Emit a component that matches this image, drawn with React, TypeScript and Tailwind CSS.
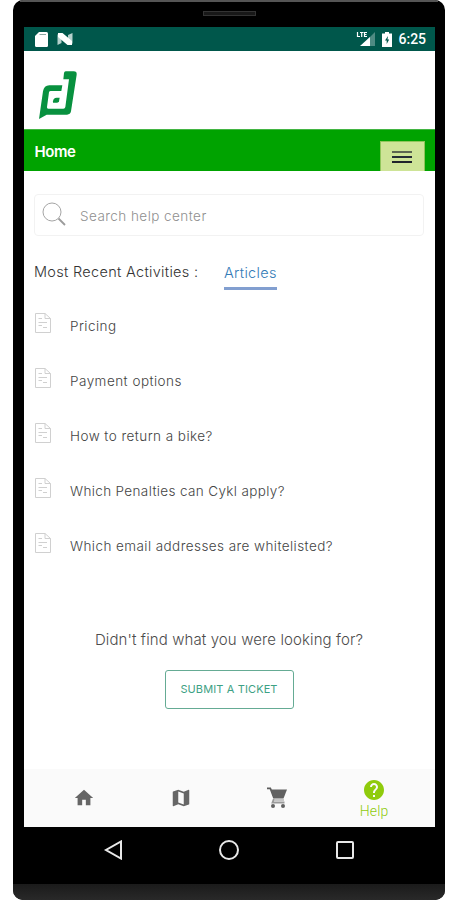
import React from 'react'
import { MdHome, MdMap, MdHelp } from 'react-icons/md'

const articles = [
  { title: 'Pricing', spacing: 'tracking-[0.45px]' },
  { title: 'Payment options', spacing: 'tracking-[0.48px]' },
  { title: 'How to return a bike?', spacing: 'tracking-[0.45px]' },
  { title: 'Which Penalties can Cykl apply?', spacing: 'tracking-[0.36px]' },
  { title: 'Which email addresses are whitelisted?', spacing: 'tracking-[0.43px]' },
]

function StatusBar() {
  return (
    <div className="h-6 bg-[#00574b] flex items-center pl-[11px] pr-2 text-white">
      <svg className="w-[13px] h-[15px]" viewBox="0 0 13 15">
        <path d="M4 0H11.5Q13 0 13 1.5V13.500Q13 15 11.500 15H1.500Q0 15 0 13.500V4Z" fill="#fff" />
        <path d="M4.500 2.500H11" stroke="#8aa7a2" strokeWidth="1.200" />
      </svg>
      <svg className="w-[16px] h-[14px] ml-[9px]" viewBox="0 0 16 14">
        <path d="M0.500 2.500 4.500 1V11L0.500 13ZM11 3 15.500 1V11.500L11 13Z" fill="#b5d0cc" />
        <path d="M1 1H5.500L15 9V13H10.500L1 5Z" fill="#fff" />
      </svg>
      <div className="flex-1" />
      <svg className="w-[20px] h-[16px]" viewBox="0 0 20 16">
        <path d="M19 1V15H5Z" fill="#4f8b83" />
        <path d="M14 6V15H4Z" fill="#fff" />
        <path d="M1.500 1V5.500H4M4 1.500H7.500M5.700 1.500V6M11 1.500H8.500V5.500H11M8.500 3.500H10.500" stroke="#fff" strokeWidth="1.200" fill="none" />
      </svg>
      <svg className="w-[10px] h-[15px] ml-[6px]" viewBox="0 0 10 15">
        <path d="M3 0H7V1.500H10V15H0V1.500H3Z" fill="#fff" />
        <path d="M6 4 3 8.500H4.700V12L7.200 7.500H5.500Z" fill="#00574b" />
      </svg>
      <span className="ml-[7px] w-[28px] font-[Roboto] font-medium text-[14px] leading-[25px] whitespace-nowrap">6:25</span>
    </div>
  )
}

function Logo() {
  return (
    <svg className="w-[38px] h-[48px]" viewBox="0 0 114 144">
      <path
        d="M80 1H104Q114 1 113 11L96 121Q94 131 84 131H23L0 144L12 61Q15 43 31 43H70L67 60H35Q31 60 30 64L24 108Q23 113 28 113H73Q78 113 79 108L90 25H73L75 6Q76 1 80 1Z"
        fill="#08913f"
      />
      <path d="M42 91Q43 80 53 80H62L60 91Q59 95 54 95H42Z" fill="#08913f" />
    </svg>
  )
}

function ArticleIcon() {
  return (
    <svg className="w-[17px] h-5" viewBox="0 0 17 20" fill="none" stroke="#d0d0d0" strokeWidth="1">
      <path d="M1.500 0.500H11L16.500 5.500V19.500H1.500Z" />
      <path d="M11 0.500V5.500H16.500M4.500 5.500H8M4.500 9.500H13M4.500 12.500H8M9 14.500H13" />
    </svg>
  )
}

function CartIcon() {
  return (
    <svg className="w-[22px] h-[22px]" viewBox="0 0 22 22" fill="none">
      <path d="M1 1.300H4.300L8 11" stroke="#5c5c5c" strokeWidth="1.800" />
      <path d="M4.500 2.500H21L17.500 11.500H8Z" fill="#616161" />
      <path d="M8 11.500 6.500 15.500H18.500" stroke="#9a9a9a" strokeWidth="1.800" />
      <path d="M8 13H18" stroke="#b5b5b5" strokeWidth="1.500" />
      <circle cx="7" cy="19" r="2" fill="#616161" />
      <circle cx="17" cy="19" r="2" fill="#616161" />
    </svg>
  )
}

export default function App() {
  return (
    <div className="w-[457px] h-[900px] bg-white pl-[13px] font-[Inter,sans-serif]">
      <div className="w-[432px] h-[900px] bg-black rounded-[10px] overflow-hidden flex flex-col">
        {/* Speaker */}
        <div className="h-[27px] shrink-0 flex flex-col items-center">
          <div className="w-[418px] h-[2px] bg-[#555]" />
          <div className="mt-[9px] w-[53px] h-[5px] border border-[#333] bg-[#181818]" />
        </div>

        <div className="w-[411px] ml-[10.500px] h-[800px] shrink-0 bg-white flex flex-col">
          <StatusBar />
          <header className="h-[78px] pl-[15px] pt-5">
            <Logo />
          </header>
          <div className="h-[42px] bg-[#00a300] border-t border-[#43b543] flex justify-between pl-[11px] pr-[10px]">
            <h1 className="text-white font-semibold text-[15px] leading-[43px] tracking-[-0.400px]">Home</h1>
            <button className="mt-[11px] w-[45px] h-[30px] bg-[#cee497] border border-b-0 border-[#8fc65a] flex flex-col items-center justify-center gap-[3px]">
              <span className="w-5 h-[2px] bg-[#5c6650]" />
              <span className="w-5 h-[2px] bg-[#252c35]" />
              <span className="w-5 h-[2px] bg-[#20242c]" />
            </button>
          </div>

          <main className="flex-1 pl-[10.500px] pr-[10.500px] pt-[23px]">
            <div className="h-[42px] border border-[#f2f2f2] rounded flex items-center pl-[7px]">
              <svg className="w-6 h-6 mb-[2px]" viewBox="0 0 24 24" fill="none" stroke="#9b9b9b">
                <circle cx="10" cy="10" r="9" strokeWidth="0.900" />
                <path d="M16.500 16.500 23 23" strokeWidth="1.800" />
              </svg>
              <span className="ml-[14px] mt-[2px] text-[13.500px] font-light text-[#8f8f8f] tracking-[0.450px]">Search help center</span>
            </div>

            <div className="flex items-start mt-[23px] h-[31px] text-[14.500px] leading-[25px] tracking-[0.300px]">
              <span className="w-[190px] font-light text-[#333] whitespace-nowrap">Most Recent Activities :</span>
              <span className="h-[31px] border-b-[3px] border-[#829fd0] font-light text-[#347bb7] leading-[27px] whitespace-nowrap">Articles</span>
            </div>

            <ul className="mt-[23px]">
              {articles.map(article => (
                <li key={article.title} className="flex h-[55px]">
                  <ArticleIcon />
                  <span className={`ml-[19px] mt-[1px] text-[13.500px] leading-6 font-light text-[#444] whitespace-nowrap ${article.spacing}`}>
                    {article.title}
                  </span>
                </li>
              ))}
            </ul>

            <div className="mt-[40px] flex flex-col items-center">
              <p className="text-[15px] leading-6 font-light text-[#4c4c4c] tracking-[0.110px] whitespace-nowrap">Didn't find what you were looking for?</p>
              <button className="mt-[18px] w-[129px] h-[39px] border border-[#65ab94] rounded-[3px] text-[11px] tracking-[0.120px] text-[#3da184] whitespace-nowrap">
                SUBMIT A TICKET
              </button>
            </div>
          </main>

          <nav className="h-[58px] bg-[#fafafa] flex items-center pl-[12px] pr-[12px] text-[#666]">
            <div className="flex-1 flex justify-center"><MdHome size={22} /></div>
            <div className="flex-1 flex justify-center"><MdMap size={22} /></div>
            <div className="flex-1 flex justify-center"><CartIcon /></div>
            <div className="flex-1 flex flex-col items-center text-[#8fcb0c] pt-[2px]">
              <MdHelp size={24} />
              <span className="text-[14px] leading-[18px] font-light font-[Roboto] tracking-[0.200px]">Help</span>
            </div>
          </nav>
        </div>

        {/* System navigation */}
        <div className="h-[57px] shrink-0 flex items-center justify-center gap-[96px] pb-[11px]">
          <svg className="w-5 h-5" viewBox="0 0 20 20" fill="none" stroke="#e8e8e8" strokeWidth="2">
            <path d="M18 1.500V18.500L3 10Z" />
          </svg>
          <svg className="w-5 h-5" viewBox="0 0 20 20" fill="none" stroke="#e8e8e8" strokeWidth="2">
            <circle cx="10" cy="10" r="9" />
          </svg>
          <svg className="w-5 h-5" viewBox="0 0 20 20" fill="none" stroke="#e8e8e8" strokeWidth="2">
            <rect x="2" y="2" width="16" height="16" rx="1" />
          </svg>
        </div>
        <div className="flex-1 bg-linear-to-b from-[#1b1b1b] to-[#292929]" />
      </div>
    </div>
  )
}
